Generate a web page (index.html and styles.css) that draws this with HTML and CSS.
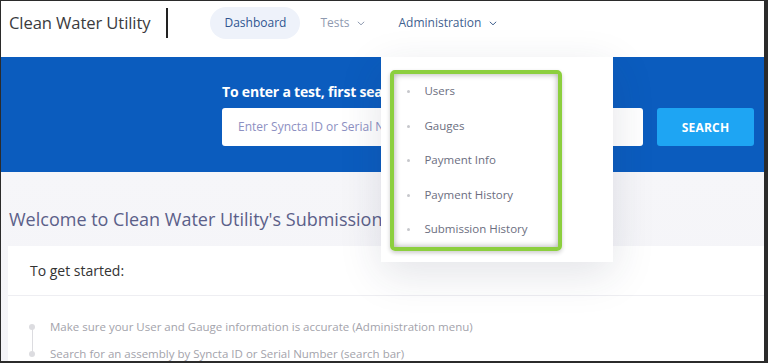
FILE: index.html
```html
<!DOCTYPE html>
<html lang="en">
<head>
<meta charset="utf-8">
<title>Clean Water Utility</title>
<link rel="stylesheet" href="styles.css">
</head>
<body>
<div class="frame">
  <header class="topbar">
    <div class="brand">Clean Water Utility</div>
    <div class="sep"></div>
    <nav class="nav">
      <a class="nav-item pill">Dashboard</a>
      <a class="nav-item tests">Tests
        <svg class="chev" width="8" height="5" viewBox="0 0 8 5"><path d="M0.8 0.8 L4 3.8 L7.2 0.8" fill="none" stroke="currentColor" stroke-width="1"/></svg>
      </a>
      <div class="nav-item admin">Administration
        <svg class="chev" width="8" height="5" viewBox="0 0 8 5"><path d="M0.8 0.8 L4 3.8 L7.2 0.8" fill="none" stroke="currentColor" stroke-width="1"/></svg>
        <div class="dropdown">
          <ul class="menu">
            <li>Users</li>
            <li>Gauges</li>
            <li>Payment Info</li>
            <li>Payment History</li>
            <li>Submission History</li>
          </ul>
        </div>
      </div>
    </nav>
  </header>

  <section class="banner">
    <h2 class="banner-title">To enter a test, first search for an assembly</h2>
    <div class="search">
      <div class="search-input">Enter Syncta ID or Serial Number</div>
      <button class="search-btn">SEARCH</button>
    </div>
  </section>

  <main class="content">
    <h1 class="welcome">Welcome to Clean Water Utility's Submission Portal</h1>
    <div class="card">
      <div class="card-head">To get started:</div>
      <ul class="steps">
        <li>Make sure your User and Gauge information is accurate (Administration menu)</li>
        <li>Search for an assembly by Syncta ID or Serial Number (search bar)</li>
      </ul>
    </div>
  </main>
</div>
</body>
</html>
```
FILE: styles.css
```css
* { box-sizing: border-box; }
html, body { margin: 0; padding: 0; }
body {
  font-family: "Open Sans", "Noto Sans", "Liberation Sans", sans-serif;
  background: #2b2b2b;
}
.frame {
  width: 768px;
  height: 363px;
  overflow: hidden;
  border-top: 1px solid #2b2b2b;
  border-left: 1px solid #2b2b2b;
  border-right: 4px solid #2b2b2b;
  border-bottom: 2px solid #2b2b2b;
  background: #f6f6f9;
  display: flex;
  flex-direction: column;
}
.topbar {
  height: 56px;
  flex: none;
  background: #fff;
  display: flex;
  align-items: flex-start;
  padding: 6px 0 0 8px;
  position: relative;
  z-index: 2;
}
.brand {
  font-size: 16.6px;
  color: #3b3b3d;
  line-height: 32px;
  font-weight: 500;
  letter-spacing: -0.1px;
}
.sep {
  width: 2px;
  height: 30px;
  margin: 1px 0 0 16px;
  background: #222;
}
.nav {
  display: flex;
  align-items: center;
  margin-left: 42px;
  height: 32px;
}
.nav-item {
  font-size: 12px;
  line-height: 32px;
  display: flex;
  align-items: center;
  text-decoration: none;
}
.pill {
  background: #eef2fa;
  color: #2f5590;
  border-radius: 16px;
  padding: 0 14px;
  height: 32px;
}
.tests {
  color: #8f9ab0;
  margin-left: 20px;
}
.chev { margin-left: 8px; margin-top: 1px; }
.admin {
  color: #41618f;
  margin-left: 33px;
  position: relative;
}
.dropdown {
  position: absolute;
  left: -17px;
  top: 50px;
  width: 232px;
  height: 205px;
  background: #fff;
  box-shadow: 0 12px 40px rgba(40, 45, 80, 0.13);
  padding: 13px 0 0 9px;
}
.menu {
  list-style: none;
  margin: 0;
  padding: 0;
  width: 172px;
  height: 181px;
  border: 4px solid #8ccf3e;
  border-radius: 5px;
  box-shadow: inset 0 0 6px rgba(0, 0, 0, 0.35), 0 2px 4px rgba(0, 0, 0, 0.2);
}
.menu li {
  height: 34.5px;
  line-height: 34.5px;
  font-size: 11.5px;
  color: #6b6e80;
  padding-left: 30px;
  position: relative;
}
.menu li::before {
  content: "";
  position: absolute;
  left: 13px;
  top: 16px;
  width: 3px;
  height: 3px;
  border-radius: 50%;
  background: #c6c7cc;
}
.banner {
  height: 115px;
  flex: none;
  background: #0b5cbe;
  padding: 25px 10px 0 221px;
}
.banner-title {
  margin: 0;
  font-size: 14px;
  line-height: 20px;
  font-weight: 700;
  color: #fff;
  letter-spacing: -0.2px;
}
.search {
  display: flex;
  margin-top: 6px;
  gap: 14px;
}
.search-input {
  width: 421px;
  height: 38px;
  background: #fff;
  border-radius: 3px;
  color: #8d90c2;
  font-size: 12px;
  line-height: 38px;
  padding-left: 16px;
}
.search-btn {
  width: 97px;
  height: 38px;
  border: 0;
  border-radius: 3px;
  background: #1ea5f3;
  color: #fff;
  font-family: inherit;
  font-weight: 700;
  font-size: 12px;
  letter-spacing: 0.2px;
}
.content {
  flex: 1;
  padding: 0 0 0 7px;
  background: linear-gradient(#f6f6f9, #f3f3f7);
}
.welcome {
  margin: 0;
  height: 74px;
  padding: 34px 0 0 1px;
  font-size: 18px;
  line-height: 26px;
  font-weight: 500;
  color: #5b6089;
  white-space: nowrap;
}
.card {
  background: #fff;
  height: 200px;
}
.card-head {
  height: 50px;
  padding: 0 0 0 22px;
  font-size: 14px;
  line-height: 50px;
  font-weight: 500;
  color: #333;
  border-bottom: 1px solid #eeeef2;
}
.steps {
  list-style: none;
  margin: 0;
  padding: 17px 0 0 42px;
  position: relative;
}
.steps::before {
  content: "";
  position: absolute;
  left: 24px;
  top: 31px;
  width: 1px;
  height: 27px;
  background: #dcdce0;
}
.steps li {
  font-size: 11.5px;
  line-height: 27px;
  color: #a3a3ab;
  position: relative;
  white-space: nowrap;
}
.steps li::before {
  content: "";
  position: absolute;
  left: -21px;
  top: 11px;
  width: 6px;
  height: 6px;
  border-radius: 50%;
  background: #dcdce0;
}
```
